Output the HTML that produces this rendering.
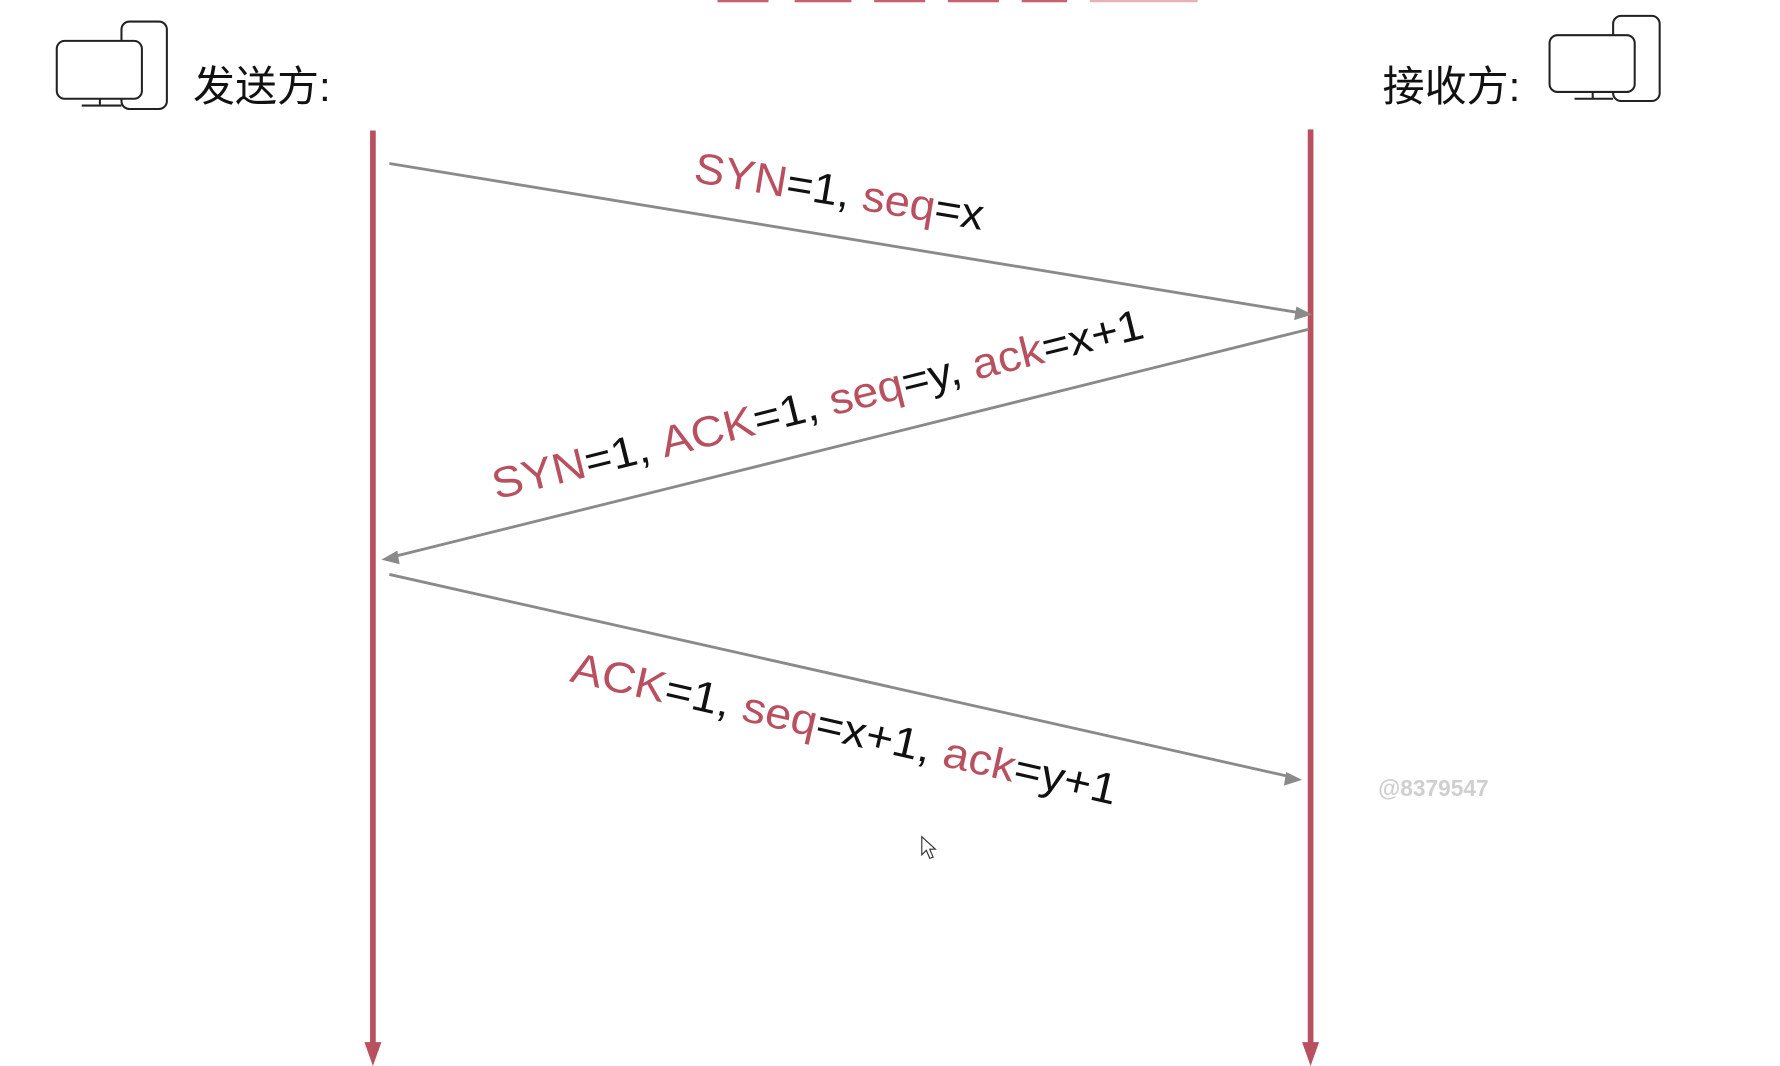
<!DOCTYPE html>
<html><head><meta charset="utf-8"><style>
html,body{margin:0;padding:0;background:#fff;width:1780px;height:1066px;overflow:hidden}
svg{display:block}
text{font-family:"Liberation Sans","Noto Sans CJK SC",sans-serif}
.r{fill:#b8505f}.k{fill:#111}
</style></head><body>
<svg width="1780" height="1066" viewBox="0 0 1568 939" preserveAspectRatio="none">
<!-- title remnants -->
<g fill="#c86070">
<rect x="632" y="0" width="45" height="2"/><rect x="700" y="0" width="50" height="2"/><rect x="770" y="0" width="45" height="2"/>
<rect x="835" y="0" width="45" height="2"/><rect x="900" y="0" width="40" height="2"/><rect x="960" y="0" width="95" height="2" fill="#eab0b8"/>
</g>
<!-- left icon -->
<g fill="none" stroke="#222" stroke-width="1.8">
<rect x="107" y="19" width="40" height="77" rx="7"/>
<rect x="50" y="36" width="75" height="51" rx="7" fill="#fff"/>
<line x1="88" y1="87" x2="88" y2="92"/><line x1="72" y1="93" x2="107" y2="93"/>
</g>
<text x="170" y="89" font-size="37" class="k">发送方:</text>
<!-- right icon -->
<g fill="none" stroke="#222" stroke-width="1.8">
<rect x="1421" y="14" width="41" height="75" rx="7"/>
<rect x="1365" y="31" width="75" height="50" rx="7" fill="#fff"/>
<line x1="1403" y1="81" x2="1403" y2="87"/><line x1="1387" y1="87" x2="1421" y2="87"/>
</g>
<text x="1218" y="89" font-size="37" class="k">接收方:</text>
<!-- lifelines -->
<g fill="#b8505f">
<rect x="326" y="115" width="5" height="805"/>
<polygon points="321,918 336,918 328.5,939"/>
<rect x="1152" y="114" width="5" height="806"/>
<polygon points="1147,918 1162,918 1154.5,939"/>
</g>
<!-- message arrows -->
<g stroke="#8a8a8a" stroke-width="2.5" fill="#8a8a8a">
<line x1="343" y1="144" x2="1148" y2="276"/>
<polygon points="1156,277 1142,270 1140,282" stroke="none"/>
<line x1="1153" y1="290" x2="344" y2="491"/>
<polygon points="336,493 350,485 352,497" stroke="none"/>
<line x1="343" y1="506" x2="1140" y2="685"/>
<polygon points="1147,687 1133,680 1131,692" stroke="none"/>
</g>
<!-- labels -->
<text transform="translate(610,160) rotate(9.5)" font-size="38" textLength="258" lengthAdjust="spacingAndGlyphs"><tspan class="r">SYN</tspan><tspan class="k">=1, </tspan><tspan class="r">seq</tspan><tspan class="k">=x</tspan></text>
<text transform="translate(437,440) rotate(-14)" font-size="38" textLength="590" lengthAdjust="spacingAndGlyphs"><tspan class="r">SYN</tspan><tspan class="k">=1, </tspan><tspan class="r">ACK</tspan><tspan class="k">=1, </tspan><tspan class="r">seq</tspan><tspan class="k">=y, </tspan><tspan class="r">ack</tspan><tspan class="k">=x+1</tspan></text>
<text transform="translate(501,600) rotate(12.8)" font-size="38" textLength="492" lengthAdjust="spacingAndGlyphs"><tspan class="r">ACK</tspan><tspan class="k">=1, </tspan><tspan class="r">seq</tspan><tspan class="k">=x+1, </tspan><tspan class="r">ack</tspan><tspan class="k">=y+1</tspan></text>
<text x="1214" y="701" font-size="20" font-weight="bold" fill="#cfcfcf">@8379547</text>
<!-- cursor -->
<path d="M812,737 L812,753 L816,749 L819,756 L822,755 L819,748 L824,748 Z" fill="#fff" stroke="#333" stroke-width="1"/>
</svg>
</body></html>
